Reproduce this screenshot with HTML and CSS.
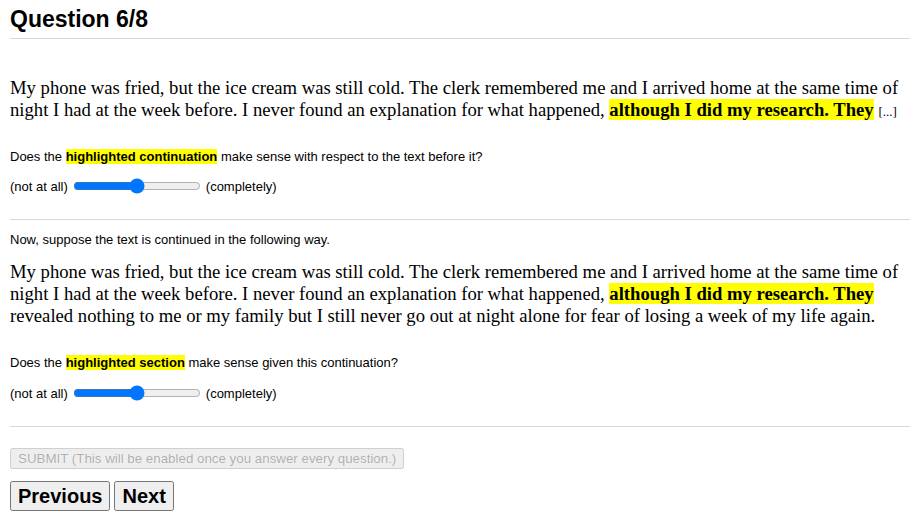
FILE: index.html
```html
<!DOCTYPE html>
<html>
<head>
<meta charset="utf-8">
<link rel="stylesheet" href="styles.css">
</head>
<body>
<h2 class="title">Question 6/8</h2>
<hr class="rule">
<p class="story">My phone was fried, but the ice cream was still cold. The clerk remembered me and I arrived home at the same time of night I had at the week before. I never found an explanation for what happened, <span class="hl">although I did my research. They</span> <span class="ellipsis">[...]</span></p>
<p class="question">Does the <span class="hlq">highlighted continuation</span> make sense with respect to the text before it?</p>
<div class="scale"><span>(not at all)</span><input class="slider" type="range" min="0" max="100" value="50"><span>(completely)</span></div>
<hr class="rule rule-mid">
<p class="note">Now, suppose the text is continued in the following way.</p>
<p class="story story2">My phone was fried, but the ice cream was still cold. The clerk remembered me and I arrived home at the same time of night I had at the week before. I never found an explanation for what happened, <span class="hl">although I did my research. They</span> revealed nothing to me or my family but I still never go out at night alone for fear of losing a week of my life again.</p>
<p class="question question2">Does the <span class="hlq">highlighted section</span> make sense given this continuation?</p>
<div class="scale scale2"><span>(not at all)</span><input class="slider" type="range" min="0" max="100" value="50"><span>(completely)</span></div>
<hr class="rule rule-mid">
<button class="submit" disabled>SUBMIT (This will be enabled once you answer every question.)</button>
<div class="nav"><button class="navbtn">Previous</button><button class="navbtn">Next</button></div>
</body>
</html>
```
FILE: styles.css
```css
body {
  margin: 0;
  padding: 0 8px 0 10px;
  font-family: "Liberation Sans", Arial, sans-serif;
  font-size: 13px;
  color: #000;
  background: #fff;
}
.title {
  margin: 0;
  padding-top: 6px;
  font-size: 23px;
  font-weight: bold;
  line-height: 26px;
}
.rule {
  border: 0;
  border-top: 1px solid #d8d8d8;
  margin: 6px 0 0 0;
  height: 0;
}
.story {
  font-family: "Liberation Serif", "Times New Roman", serif;
  font-size: 18.67px;
  line-height: 22px;
  margin: 38px 0 0 0;
}
.story2 {
  margin-top: 13px;
}
.hl {
  background: #ffff00;
  font-weight: bold;
}
.ellipsis {
  font-size: 13px;
}
.hlq {
  background: #ffff00;
  font-weight: bold;
}
.question {
  margin: 26px 0 0 0;
  line-height: 16px;
}
.question2 {
  margin-top: 28px;
}
.scale {
  display: flex;
  align-items: center;
  margin-top: 11px;
  height: 20px;
}
.scale2 {
  margin-top: 12px;
}
.slider {
  width: 128px;
  margin: 0 5px 0 5px;
  accent-color: #0075ff;
}
.note {
  margin: 12px 0 0 0;
  line-height: 16px;
}
.rule-mid {
  margin-top: 23px;
}
.submit {
  margin-top: 21px;
  font-family: "Liberation Sans", Arial, sans-serif;
  font-size: 13.33px;
  padding: 1px 6px;
  height: 21px;
  width: 394px;
  display: block;
  white-space: nowrap;
}
.nav {
  display: flex;
  gap: 4px;
  margin-top: 12px;
}
.navbtn {
  font-family: "Liberation Sans", Arial, sans-serif;
  font-size: 20px;
  font-weight: bold;
  padding: 2px 6px;
  height: 30px;
}
```
